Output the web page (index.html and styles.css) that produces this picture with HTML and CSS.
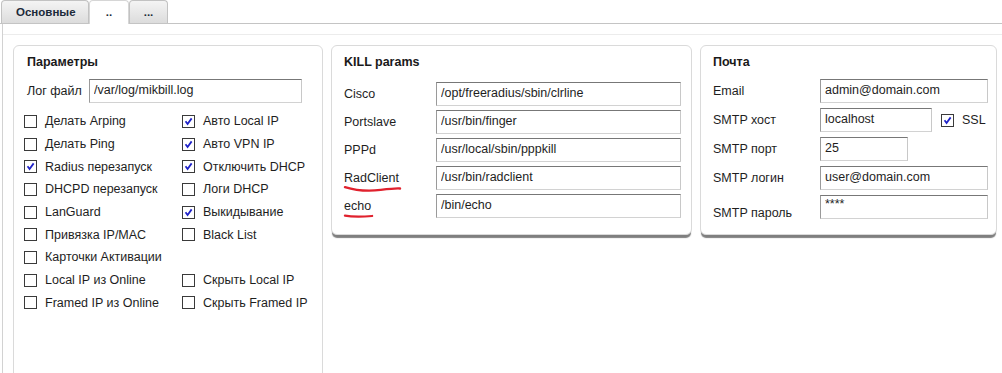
FILE: index.html
```html
<!DOCTYPE html>
<html lang="ru">
<head>
    <meta charset="UTF-8">
    <title>Настройки</title>
    <link rel="stylesheet" href="styles.css">
</head>
<body>
    <div class="tabs">
        <div class="tab">Основные</div>
        <div class="tab active">..</div>
        <div class="tab">...</div>
    </div>

    <div class="tab-body">
        <div class="tab-inner">
            <div class="panels">

                <!-- Параметры -->
                <div class="panel panel-params">
                    <div class="panel-title">Параметры</div>
                    <div class="log-row">
                        <span class="log-label">Лог файл</span>
                        <input class="field field-log" type="text" value="/var/log/mikbill.log">
                    </div>
                    <div class="checks">
                        <label class="check"><span class="box"></span>Делать Arping</label>
                        <label class="check"><span class="box on"><svg viewBox="0 0 13 13"><path d="M3 6.2 L5.4 9.4 L10.2 2.8"/></svg></span>Авто Local IP</label>
                        <label class="check"><span class="box"></span>Делать Ping</label>
                        <label class="check"><span class="box on"><svg viewBox="0 0 13 13"><path d="M3 6.2 L5.4 9.4 L10.2 2.8"/></svg></span>Авто VPN IP</label>
                        <label class="check"><span class="box on"><svg viewBox="0 0 13 13"><path d="M3 6.2 L5.4 9.4 L10.2 2.8"/></svg></span>Radius перезапуск</label>
                        <label class="check"><span class="box on"><svg viewBox="0 0 13 13"><path d="M3 6.2 L5.4 9.4 L10.2 2.8"/></svg></span>Отключить DHCP</label>
                        <label class="check"><span class="box"></span>DHCPD перезапуск</label>
                        <label class="check"><span class="box"></span>Логи DHCP</label>
                        <label class="check"><span class="box"></span>LanGuard</label>
                        <label class="check"><span class="box on"><svg viewBox="0 0 13 13"><path d="M3 6.2 L5.4 9.4 L10.2 2.8"/></svg></span>Выкидывание</label>
                        <label class="check"><span class="box"></span>Привязка IP/MAC</label>
                        <label class="check"><span class="box"></span>Black List</label>
                        <label class="check"><span class="box"></span>Карточки Активации</label>
                        <span></span>
                        <label class="check"><span class="box"></span>Local IP из Online</label>
                        <label class="check"><span class="box"></span>Скрыть Local IP</label>
                        <label class="check"><span class="box"></span>Framed IP из Online</label>
                        <label class="check"><span class="box"></span>Скрыть Framed IP</label>
                    </div>
                </div>

                <!-- KILL params -->
                <div class="panel panel-kill">
                    <div class="panel-title">KILL params</div>
                    <div class="form form-kill">
                        <span class="label">Cisco</span>
                        <input class="field" type="text" value="/opt/freeradius/sbin/clrline">
                        <span class="label">Portslave</span>
                        <input class="field" type="text" value="/usr/bin/finger">
                        <span class="label">PPPd</span>
                        <input class="field" type="text" value="/usr/local/sbin/pppkill">
                        <span class="label marked">RadClient<svg class="scribble scribble-long" viewBox="0 0 60 8"><path d="M1 2 C 12 5.5, 26 6.5, 38 5 S 54 3, 58 3.5"/></svg></span>
                        <input class="field" type="text" value="/usr/bin/radclient">
                        <span class="label marked">echo<svg class="scribble scribble-short" viewBox="0 0 32 6"><path d="M1 2.5 C 8 3.8, 18 3.8, 30 3"/></svg></span>
                        <input class="field" type="text" value="/bin/echo">
                    </div>
                </div>

                <!-- Почта -->
                <div class="panel panel-mail">
                    <div class="panel-title">Почта</div>
                    <div class="form form-mail">
                        <span class="label">Email</span>
                        <input class="field" type="text" value="admin@domain.com">
                        <span class="label">SMTP хост</span>
                        <div class="host-row">
                            <input class="field field-host" type="text" value="localhost">
                            <label class="check"><span class="box on"><svg viewBox="0 0 13 13"><path d="M3 6.2 L5.4 9.4 L10.2 2.8"/></svg></span>SSL</label>
                        </div>
                        <span class="label">SMTP порт</span>
                        <input class="field field-port" type="text" value="25">
                        <span class="label">SMTP логин</span>
                        <input class="field" type="text" value="user@domain.com">
                        <span class="label label-low">SMTP пароль</span>
                        <input class="field field-pass" type="text" value="****">
                    </div>
                </div>

            </div>
        </div>
    </div>
</body>
</html>
```

FILE: styles.css
```css
* {
    margin: 0;
    padding: 0;
    box-sizing: border-box;
}

body {
    font-family: "Liberation Sans", Arial, sans-serif;
    font-size: 12.5px;
    color: #1e1e1e;
    background: #fff;
    width: 1002px;
    height: 373px;
    overflow: hidden;
}

/* tabs */
.tabs {
    display: flex;
    height: 24px;
    padding-left: 1px;
    border-bottom: 1px solid #c4c4c4;
}

.tab {
    height: 23px;
    padding: 0 14px;
    line-height: 22px;
    font-size: 11.5px;
    font-weight: bold;
    color: #1c2a3a;
    background: linear-gradient(#f4f4f4, #dcdcdc);
    border: 1px solid #c2c2c2;
    border-bottom: none;
    border-radius: 4px 4px 0 0;
}

.tab:first-child {
    width: 88px;
}

.tab.active {
    width: 40px;
    height: 24px;
    margin-bottom: -1px;
    padding-top: 0;
    text-align: center;
    background: #fff;
    border-color: #d6d6d6;
}

.tab:last-child {
    width: 39px;
    text-align: center;
    padding: 0;
}

.tab-body {
    margin-left: 2px;
    border-left: 1px solid #d2d2d2;
    height: 349px;
    padding-top: 10px;
}

.tab-inner {
    border-top: 1px solid #ececec;
    padding: 10px 0 0 10px;
}

.panels {
    display: flex;
    align-items: flex-start;
    gap: 8px;
}

/* panels */
.panel {
    background: #fff;
    border: 1px solid #dadada;
    border-radius: 6px;
    padding: 8px 10px 0 13px;
}

.panel-params {
    width: 310px;
    height: 340px;
}

.panel-kill {
    width: 361px;
    height: 190px;
    padding-left: 12px;
    box-shadow: 0 4px 1px -1px rgba(0, 0, 0, 0.5);
}

.panel-mail {
    width: 297px;
    height: 190px;
    padding-left: 12px;
    box-shadow: 0 4px 1px -1px rgba(0, 0, 0, 0.5);
}

.panel-title {
    font-weight: bold;
    line-height: 16px;
    color: #1a1a1a;
}

/* inputs */
.field {
    height: 24px;
    padding: 0 0 2px 4px;
    font: inherit;
    color: #1e1e1e;
    background: #fff;
    border: 1px solid;
    border-color: #777 #c8c8c8 #d2d2d2 #9a9a9a;
    outline: none;
}

.log-row {
    display: flex;
    align-items: center;
    margin-top: 9px;
}

.log-label {
    width: 62px;
}

.field-log {
    width: 213px;
}

/* checkboxes */
.checks {
    display: grid;
    grid-template-columns: 158px auto;
    grid-auto-rows: 22.7px;
    margin-top: 7px;
    margin-left: -3px;
}

.check {
    display: flex;
    align-items: center;
    gap: 8px;
    white-space: nowrap;
}

.box {
    width: 13px;
    height: 13px;
    border: 1px solid #3a3a3a;
    background: #fff;
    display: inline-block;
    flex: none;
}

.box svg {
    display: block;
    width: 11px;
    height: 11px;
}

.box svg path {
    fill: none;
    stroke: #1f22c8;
    stroke-width: 2.1;
}

/* forms */
.form {
    display: grid;
    align-items: center;
}

.form-kill {
    grid-template-columns: 92px 245px;
    grid-auto-rows: 24px;
    row-gap: 4px;
    margin-top: 12px;
}

.form-mail {
    grid-template-columns: 107px 1fr;
    grid-auto-rows: 24px;
    row-gap: 5px;
    margin-top: 9px;
}

.form-mail .field {
    width: 168px;
}

.form-mail .field-host {
    width: 112px;
}

.form-mail .field-port {
    width: 88px;
}

.field-pass {
    padding-bottom: 6px;
}

.label {
    line-height: 16px;
}

.label-low {
    padding-top: 11px;
}

.host-row {
    display: flex;
    align-items: center;
    gap: 9px;
}

/* red pen marks */
.marked {
    position: relative;
}

.scribble {
    position: absolute;
    left: 0;
    top: 15px;
    overflow: visible;
}

.scribble path {
    fill: none;
    stroke: #e0212d;
    stroke-width: 2.4;
    stroke-linecap: round;
}

.scribble-long {
    width: 58px;
    height: 8px;
}

.scribble-short {
    width: 30px;
    height: 6px;
}
```
